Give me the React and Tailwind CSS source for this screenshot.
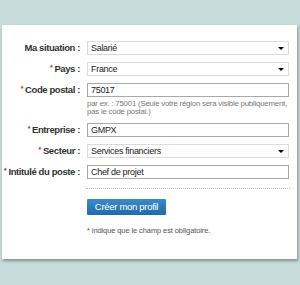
const fields = [
  { label: 'Ma situation :', value: 'Salarié', select: true },
  { label: 'Pays :', value: 'France', select: true, req: true },
  { label: 'Code postal :', value: '75017', req: true, hint: true },
  { label: 'Entreprise :', value: 'GMPX', req: true },
  { label: 'Secteur :', value: 'Services financiers', select: true, req: true },
  { label: 'Intitulé du poste :', value: 'Chef de projet', req: true },
]

const Row = ({ f }) => (
  <>
    <div className="flex h-[14px] items-center">
      <div className="w-[78px] text-right text-[9.5px] font-bold leading-none tracking-[-0.4px] text-[#333] whitespace-nowrap">
        {f.req && <span className="mr-[2px] align-top text-[7px] text-[#c0272d]">*</span>}
        {f.label}
      </div>
      <div
        className={`ml-[7px] flex h-[14px] w-[202px] items-center justify-between px-[3px] text-[9px] leading-none tracking-[-0.3px] text-[#222] ${
          f.select ? 'border border-[#dcdcdc] bg-white' : 'border border-[#a9a9a9] bg-white'
        }`}
      >
        <span>{f.value}</span>
        {f.select && (
          <span className="mr-[1px] h-0 w-0 border-x-[3px] border-t-[3px] border-x-transparent border-t-black" />
        )}
      </div>
    </div>
    {f.hint && (
      <div className="-mt-[4px] ml-[85px] whitespace-nowrap text-[7.8px] leading-[8px] tracking-[-0.2px] text-[#777]">
        par ex. : 75001 (Seule votre région sera visible publiquement,
        <br />
        pas le code postal.)
      </div>
    )}
  </>
)

export default function App() {
  return (
    <div className="h-[285px] w-[300px] bg-[#c8dcdb] pt-[25px] font-['Liberation_Sans',Arial,sans-serif]">
      <div className="ml-[2px] h-[234px] w-[295px] bg-white pt-[16px] shadow-[1px_2px_3px_rgba(60,80,80,0.55)]">
        <div className="flex flex-col gap-[7px]">
          {fields.map((f) => (
            <Row key={f.label} f={f} />
          ))}
        </div>
        <div className="ml-[84px] mt-[9px] w-[204px] border-t border-dotted border-[#bbb]" />
        <button className="ml-[85px] mt-[10px] h-[16px] w-[79px] rounded-[1px] bg-gradient-to-b from-[#3b8ccb] to-[#1f6aa8] text-[9.5px] leading-none tracking-[-0.3px] text-white">
          Créer mon profil
        </button>
        <div className="ml-[85px] mt-[10px] text-[7.5px] leading-none tracking-[-0.1px] text-[#555]">
          <span className="text-[#c0272d]">*</span> indique que le champ est obligatoire.
        </div>
      </div>
    </div>
  )
}
